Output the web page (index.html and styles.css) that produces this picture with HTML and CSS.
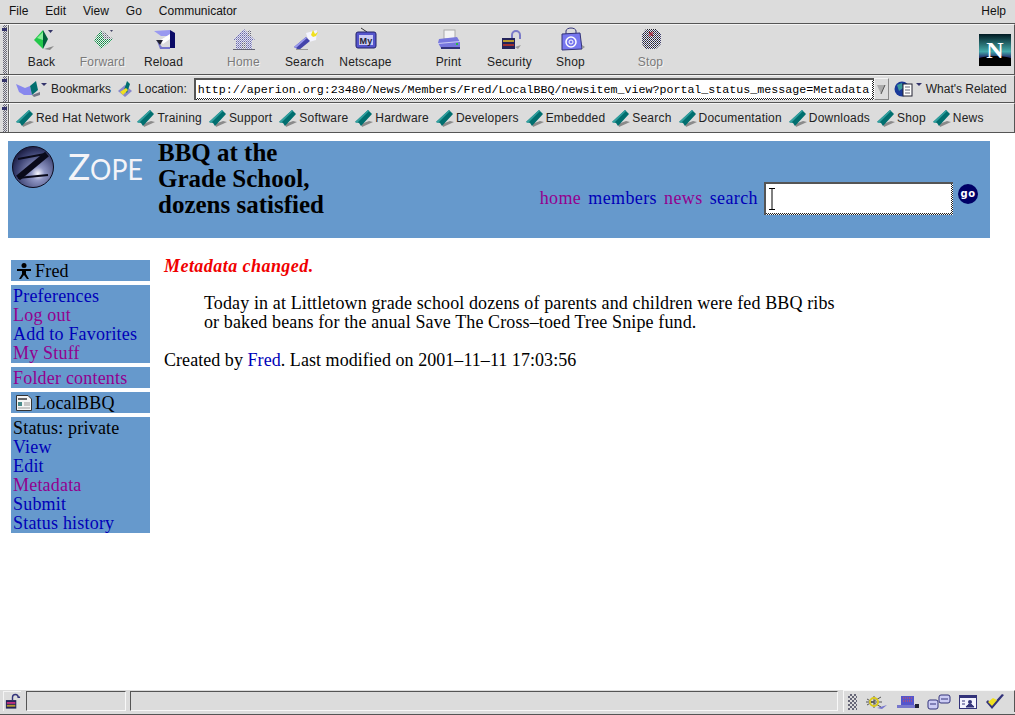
FILE: index.html
```html
<!DOCTYPE html>
<html lang="en">
<head>
  <meta charset="UTF-8" />
  <title>BBQ at the Grade School, dozens satisfied</title>
  <link rel="stylesheet" href="styles.css">
</head>
<body>
  <!-- shared icons -->
  <svg class="defs" width="0" height="0">
    <defs>
      <pattern id="dith-green" width="2" height="2" patternUnits="userSpaceOnUse">
        <rect width="2" height="2" fill="#eef4ee"/><rect width="1" height="1" fill="#117744"/><rect x="1" y="1" width="1" height="1" fill="#33aa66"/>
      </pattern>
      <pattern id="dith-grey" width="2" height="2" patternUnits="userSpaceOnUse">
        <rect width="2" height="2" fill="#e8e8e8"/><rect width="1" height="1" fill="#667"/><rect x="1" y="1" width="1" height="1" fill="#aab"/>
      </pattern>
      <pattern id="dith-blue" width="2" height="2" patternUnits="userSpaceOnUse">
        <rect width="2" height="2" fill="#e4e4ee"/><rect width="1" height="1" fill="#6666aa"/><rect x="1" y="1" width="1" height="1" fill="#9999cc"/>
      </pattern>
      <pattern id="dith-dark" width="2" height="2" patternUnits="userSpaceOnUse">
        <rect width="2" height="2" fill="#e4e4f0"/><rect width="1" height="1" fill="#222"/><rect x="1" y="1" width="1" height="1" fill="#444466"/>
      </pattern>
      <radialGradient id="zsphere" cx="0.62" cy="0.66" r="0.75">
        <stop offset="0" stop-color="#f8f8ff"/><stop offset="0.22" stop-color="#8f96c4"/><stop offset="0.7" stop-color="#3a4070"/><stop offset="1" stop-color="#101030"/>
      </radialGradient>
      <linearGradient id="nsky" x1="0" y1="0" x2="0" y2="1">
        <stop offset="0" stop-color="#001a22"/><stop offset="0.55" stop-color="#44aaaa"/><stop offset="0.75" stop-color="#226"/>
      </linearGradient>
      <symbol id="i-mark" viewBox="0 0 18 17">
        <polygon points="7,17 18,12 14,11 6,14" fill="#8a8a8a"/>
        <polygon points="0,12 13,0 17,4 6,16 4,13" fill="#006f6f"/>
        <polygon points="0,12 13,0 14,1 2,13" fill="#33a0a0"/>
      </symbol>
    </defs>
  </svg>

  <nav class="menubar">
    <span>File</span><span>Edit</span><span>View</span><span>Go</span><span>Communicator</span>
    <span class="menu-help">Help</span>
  </nav>

  <div class="bar toolbar">
    <div class="grip"></div>
    <div class="tb-group tb-first">
      <div class="tb-btn">
        <svg viewBox="0 0 32 26"><polygon points="18,22 28,19 24,23" fill="#8a8a8a"/><polygon points="8,13 17,3 17,22" fill="#22c84a"/><polygon points="11,11 17,5 17,13" fill="#88ee99"/><polygon points="17,3 22,12 17,22" fill="#00603a"/><polygon points="22,3 27,3 24.5,6" fill="#333366"/></svg>
        <span>Back</span>
      </div>
      <div class="tb-btn off">
        <svg viewBox="0 0 32 26"><polygon points="7,13 14,3 26,12 14,22" fill="url(#dith-green)"/><polygon points="14,3 26,12 17,12" fill="url(#dith-grey)"/><polygon points="23,3 26,3 24.5,5" fill="#446"/></svg>
        <span>Forward</span>
      </div>
      <div class="tb-btn">
        <svg viewBox="0 0 32 26"><polygon points="6,4 22,3 22,9 13,9" fill="#9a9af0"/><polygon points="22,3 27,6 27,21 22,21" fill="#0a0a66"/><polygon points="11,14 22,7 22,12 15,17" fill="#fff"/><polygon points="9,14 14,20 22,20 22,22 12,22" fill="#7777cc"/><polygon points="8,13 15,13 12,18" fill="#223"/></svg>
        <span>Reload</span>
      </div>
    </div>
    <div class="tb-group">
      <div class="tb-btn off">
        <svg viewBox="0 0 32 26"><polygon points="16,2 27,13 24,13 24,22 8,22 8,13 5,13" fill="url(#dith-blue)"/><rect x="20" y="3" width="3" height="6" fill="url(#dith-grey)"/><rect x="14" y="15" width="4" height="7" fill="url(#dith-grey)"/><rect x="5" y="22" width="22" height="1" fill="#667"/></svg>
        <span>Home</span>
      </div>
      <div class="tb-btn">
        <svg viewBox="0 0 32 26"><polygon points="17,6 28,3 27,13 20,15" fill="#f4f4ff"/><polygon points="24,3 26,7 29,5 27,9 24,10 22,8" fill="#f0e020"/><polygon points="5,20 17,10 21,14 10,23" fill="#4444aa"/><polygon points="5,20 17,10 18,11 7,21" fill="#9999ee"/><rect x="7" y="22" width="12" height="1" fill="#999"/></svg>
        <span>Search</span>
      </div>
      <div class="tb-btn">
        <svg viewBox="0 0 32 26"><path d="M11 1 L17 5" stroke="#333" fill="none"/><rect x="6" y="5" width="20" height="16" rx="2" fill="#5555cc" stroke="#22226a"/><rect x="9" y="8" width="14" height="10" fill="#ccccf4"/><text x="16" y="16.5" class="tv-text" text-anchor="middle">My</text></svg>
        <span>Netscape</span>
      </div>
    </div>
    <div class="tb-group tb-wide">
      <div class="tb-btn">
        <svg viewBox="0 0 32 26"><rect x="11" y="3" width="11" height="9" fill="#f4f4f4" stroke="#aaa"/><polygon points="6,12 24,10 27,15 27,20 8,21 5,16" fill="#7777dd"/><polygon points="5,16 27,14 27,15 5,17" fill="#ccccf4"/><rect x="8" y="20" width="19" height="2" fill="#33337a"/><rect x="23" y="16" width="2" height="2" fill="#22bb44"/></svg>
        <span>Print</span>
      </div>
      <div class="tb-btn">
        <svg viewBox="0 0 32 26"><path d="M18 12 V8 a4 4 0 0 1 8 0 v4" fill="none" stroke="#7a7ac8" stroke-width="2"/><rect x="8" y="11" width="13" height="11" fill="#23235a"/><rect x="9" y="13" width="11" height="2" fill="#b89a30"/><rect x="9" y="17" width="11" height="2" fill="#a03030"/><polygon points="21,20 27,18 24,22" fill="#999"/></svg>
        <span>Security</span>
      </div>
      <div class="tb-btn">
        <svg viewBox="0 0 32 26"><path d="M11 7 V4 a5 3 0 0 1 10 0 v3" fill="none" stroke="#33337a"/><polygon points="7,7 25,6 27,22 7,23" fill="#7777ee" stroke="#33337a"/><circle cx="16" cy="15" r="5" fill="none" stroke="#fff" stroke-width="1.5"/><circle cx="16" cy="15" r="2" fill="none" stroke="#fff"/><polygon points="27,18 30,20 27,22" fill="#999"/></svg>
        <span>Shop</span>
      </div>
    </div>
    <div class="tb-group">
      <div class="tb-btn off">
        <svg viewBox="0 0 32 26"><polygon points="11,2 21,2 26,7 26,17 21,22 11,22 7,17 7,7" fill="url(#dith-dark)"/><path d="M14 5 L18 9 M18 5 L14 9" stroke="#aa3344" stroke-width="1.5"/></svg>
        <span>Stop</span>
      </div>
    </div>
    <svg class="n-logo" viewBox="0 0 32 32" width="32" height="32">
      <rect width="32" height="32" fill="url(#nsky)"/>
      <ellipse cx="16" cy="36" rx="30" ry="14" fill="#000"/>
      <text x="16" y="24" class="n-letter" text-anchor="middle">N</text>
    </svg>
  </div>

  <div class="bar locbar">
    <div class="grip"></div>
    <svg class="loc-book" viewBox="0 0 24 18" width="24" height="18"><polygon points="0,4 9,8 14,6 16,15 8,15 3,12" fill="#8888ee"/><polygon points="14,6 20,1 22,10 16,15" fill="#006f6f"/><polygon points="16,15 24,12 24,15 18,17" fill="#778"/></svg>
    <span class="caret"></span>
    <span class="loc-label">Bookmarks</span>
    <svg class="loc-pin" viewBox="0 0 16 18" width="16" height="18"><polygon points="1,11 8,5 15,11 8,17" fill="#8888cc"/><polygon points="7,10 10,1 13,4 10,13" fill="#006f6f"/><polygon points="3,12 9,8 11,10 6,15" fill="#f0e020"/></svg>
    <span class="loc-label">Location:</span>
    <div class="field loc-field"><div class="field-in">http://aperion.org:23480/News/Members/Fred/LocalBBQ/newsitem_view?portal_status_message=Metadata</div></div>
    <div class="loc-drop"><svg viewBox="0 0 10 12" width="10" height="12"><polygon points="1,2 9,2 5,11" fill="#aaa"/><path d="M9 2 L5 11" stroke="#555"/></svg></div>
    <svg class="loc-rel" viewBox="0 0 22 18" width="22" height="18"><circle cx="8" cy="9" r="7.5" fill="#1a3a9a"/><path d="M3 5 L8 3 L9 8 L5 11 Z" fill="#3a9a9a"/><rect x="9" y="4" width="9" height="12" fill="#fff" stroke="#223"/><path d="M11 7 H16 M11 10 H16 M11 13 H16" stroke="#667"/></svg>
    <span class="caret"></span>
    <span class="loc-label">What's Related</span>
  </div>

  <div class="bar personal">
    <div class="grip"></div>
    <div class="marks">
      <span class="mark"><svg width="18" height="17"><use href="#i-mark"/></svg>Red Hat Network</span>
      <span class="mark"><svg width="18" height="17"><use href="#i-mark"/></svg>Training</span>
      <span class="mark"><svg width="18" height="17"><use href="#i-mark"/></svg>Support</span>
      <span class="mark"><svg width="18" height="17"><use href="#i-mark"/></svg>Software</span>
      <span class="mark"><svg width="18" height="17"><use href="#i-mark"/></svg>Hardware</span>
      <span class="mark"><svg width="18" height="17"><use href="#i-mark"/></svg>Developers</span>
      <span class="mark"><svg width="18" height="17"><use href="#i-mark"/></svg>Embedded</span>
      <span class="mark"><svg width="18" height="17"><use href="#i-mark"/></svg>Search</span>
      <span class="mark"><svg width="18" height="17"><use href="#i-mark"/></svg>Documentation</span>
      <span class="mark"><svg width="18" height="17"><use href="#i-mark"/></svg>Downloads</span>
      <span class="mark"><svg width="18" height="17"><use href="#i-mark"/></svg>Shop</span>
      <span class="mark"><svg width="18" height="17"><use href="#i-mark"/></svg>News</span>
    </div>
  </div>

  <main class="page">
    <header class="zope-head">
      <svg class="zope-logo" viewBox="0 0 135 46" width="135" height="46">
        <circle cx="21" cy="25" r="20.5" fill="url(#zsphere)" stroke="#0c0c20"/>
        <path d="M6 17 L33 12" fill="none" stroke="#0a0a1a" stroke-width="2"/>
        <path d="M35 12 L6 36" fill="none" stroke="#0a0a1a" stroke-width="6"/>
        <path d="M6 36 L36 33" fill="none" stroke="#0a0a1a" stroke-width="2"/>
        <text x="56" y="38" class="zope-z">Z</text>
        <text x="78" y="38" class="zope-ope" textLength="53" lengthAdjust="spacingAndGlyphs">OPE</text>
      </svg>
      <h1 class="zope-title">BBQ at the<br>Grade School,<br>dozens satisfied</h1>
      <div class="zope-tools">
        <a class="seen" href="#">home</a>
        <a href="#">members</a>
        <a class="seen" href="#">news</a>
        <a href="#">search</a>
        <div class="field search-field"><div class="field-in"><svg viewBox="0 0 7 22" width="7" height="22"><path d="M0 .5 H6 M3 .5 V21.5 M0 21.5 H6" stroke="#000" fill="none"/></svg></div></div>
        <svg class="go-btn" viewBox="0 0 20 20" width="20" height="20"><circle cx="10" cy="10" r="10" fill="#000066"/><text x="10" y="13" class="go-text" text-anchor="middle">go</text></svg>
      </div>
    </header>

    <div class="columns">
      <aside class="side">
        <div class="side-box side-head">
          <svg viewBox="0 0 16 16" width="16" height="16"><circle cx="8" cy="2.5" r="2.5"/><path d="M1 6 H15 V8 H10 V11 L13 16 H11 L8 12 L5 16 H3 L6 11 V8 H1 Z"/></svg>
          Fred
        </div>
        <div class="side-box">
          <a href="#">Preferences</a>
          <a class="seen" href="#">Log out</a>
          <a href="#">Add to Favorites</a>
          <a class="seen" href="#">My Stuff</a>
        </div>
        <div class="side-box">
          <a class="seen" href="#">Folder contents</a>
        </div>
        <div class="side-box side-head">
          <svg viewBox="0 0 16 16" width="16" height="16"><polygon points=".5,.5 12,.5 15.5,4 15.5,15.5 .5,15.5" fill="#f4f4f4" stroke="#333"/><rect x="2" y="3" width="9" height="2" fill="#666"/><rect x="2" y="7" width="4" height="4" fill="#4a8a8a"/><path d="M8 8 H14 M8 10 H14 M2 13 H14" stroke="#999"/></svg>
          LocalBBQ
        </div>
        <div class="side-box">
          <span>Status: private</span>
          <a href="#">View</a>
          <a href="#">Edit</a>
          <a class="seen" href="#">Metadata</a>
          <a href="#">Submit</a>
          <a href="#">Status history</a>
        </div>
      </aside>

      <section class="article">
        <p class="message">Metadata changed.</p>
        <p class="lead">Today in at Littletown grade school dozens of parents and children were fed BBQ ribs or baked beans for the anual Save The Cross–toed Tree Snipe fund.</p>
        <p class="byline">Created by <a href="#">Fred</a>. Last modified on 2001–11–11 17:03:56</p>
      </section>
    </div>
  </main>

  <footer class="status">
    <div class="st-lock"><svg viewBox="0 0 18 17" width="18" height="17"><path d="M9 7 V4 a3 3 0 0 1 6 0 h2" fill="none" stroke="#33337a" stroke-width="1.5"/><rect x="2" y="7" width="11" height="9" fill="#23235a"/><rect x="3" y="9" width="9" height="2" fill="#c03080"/><rect x="3" y="12" width="9" height="2" fill="#b89a30"/></svg></div>
    <div class="st-cell st-small"></div>
    <div class="st-cell st-wide"></div>
    <div class="st-comps">
      <div class="st-dots"></div>
      <svg viewBox="0 0 22 14" width="22" height="14"><path d="M2 4 L16 12 M2 10 L16 2 M9 1 V13 M1 7 H17" stroke="#555"/><circle cx="9" cy="7" r="4" fill="none" stroke="#d8c820" stroke-width="2"/><polygon points="12,13 22,10 17,14" fill="#7777cc"/></svg>
      <svg viewBox="0 0 24 14" width="24" height="14"><rect x="6" y="1" width="13" height="9" fill="#5555cc"/><path d="M8 3 H17 M8 6 H17" stroke="#e05050" stroke-dasharray="1 1"/><polygon points="2,10 20,10 20,13 2,13" fill="#7777cc"/><rect x="20" y="9" width="4" height="4" fill="#223"/></svg>
      <svg viewBox="0 0 24 16" width="24" height="16"><rect x="1" y="6" width="10" height="9" rx="2" fill="#ccccf4" stroke="#33337a"/><rect x="12" y="1" width="11" height="8" rx="2" fill="#ccccf4" stroke="#33337a"/><path d="M3 10 H9 M14 5 H21" stroke="#33337a"/></svg>
      <svg viewBox="0 0 18 14" width="18" height="14"><rect x=".5" y=".5" width="17" height="13" fill="#f4f4ff" stroke="#33337a"/><rect x="1" y="1" width="16" height="2" fill="#33337a"/><circle cx="11" cy="7" r="2" fill="#33337a"/><path d="M7 12 Q11 6 15 12 Z M3 6 H6 M3 9 H6" fill="#33337a" stroke="#33337a"/></svg>
      <svg viewBox="0 0 20 16" width="20" height="16"><polygon points="1,8 7,15 19,1 17,0 7,11 3,6" fill="#33337a"/><polygon points="3,8 8,4 12,6 7,12" fill="#f0e020"/></svg>
    </div>
  </footer>
</body>
</html>
```

FILE: styles.css
```css
* {
  box-sizing: border-box;
}
html, body {
  margin: 0;
  height: 100%;
}
body {
  width: 1015px;
  height: 715px;
  overflow: hidden;
  display: flex;
  flex-direction: column;
  background-color: #dcdcdc;
  font-family: "Liberation Sans", Arial, sans-serif;
  font-size: 12px;
  color: #000;
}
.defs {
  display: block;
  flex: none;
}

/* menu and toolbars */
.menubar {
  flex: none;
  height: 24px;
  display: flex;
  align-items: center;
  gap: 17px;
  padding: 0 9px 1px 9px;
  border-bottom: 1px solid #555;
  color: #111;
}
.menu-help {
  margin-left: auto;
}
.bar {
  flex: none;
  display: flex;
  align-items: center;
  border-top: 1px solid #f4f4f4;
  border-bottom: 1px solid #555;
  border-right: 1px solid #555;
}
.toolbar {
  height: 51px;
}
.locbar {
  height: 28px;
}
.personal {
  height: 30px;
}
.grip {
  flex: none;
  align-self: stretch;
  width: 9px;
  border-right: 1px solid #666;
  background-image:
    linear-gradient(#33336a, #33336a),
    repeating-conic-gradient(#667 0 25%, transparent 0 50%),
    repeating-conic-gradient(#667 0 25%, transparent 0 50%);
  background-size: 5px 3px, 2px 2px, 2px 2px;
  background-position: 2px 3px, 3px 8px, 5px 8px;
  background-repeat: no-repeat, repeat-y, repeat-y;
  box-shadow: 1px 0 0 #f4f4f4;
}

.tb-group {
  align-self: flex-start;
  margin-top: 2px;
  margin-left: 19px;
  display: flex;
}
.tb-first {
  margin-left: 2px;
}
.tb-wide {
  margin-left: 22px;
}
.tb-btn {
  width: 61px;
  display: flex;
  flex-direction: column;
  align-items: center;
  color: #222;
  letter-spacing: 0.2px;
}
.tb-btn svg {
  width: 32px;
  height: 26px;
  margin-bottom: 2px;
}
.tb-btn span {
  line-height: 14px;
}
.tb-btn.off span {
  color: #7a7a7a;
  text-shadow: 1px 1px 0 #f4f4f4;
}
.tv-text {
  font: bold 9px "Liberation Sans", sans-serif;
  fill: #223;
}
.n-logo {
  margin-left: auto;
  margin-right: 3px;
}
.n-letter {
  font: bold 24px "Liberation Serif", serif;
  fill: #fff;
}

.locbar .grip {
  margin-right: 7px;
}
.loc-label {
  flex: none;
  color: #222;
  white-space: nowrap;
}
.caret {
  flex: none;
  width: 0;
  height: 0;
  margin: -9px 4px 0 0;
  border-left: 3px solid transparent;
  border-right: 3px solid transparent;
  border-top: 3px solid #33336a;
}
.loc-pin {
  flex: none;
  margin: 0 5px 0 6px;
}
.loc-book {
  flex: none;
  margin-right: 1px;
}
.field {
  flex: none;
  border-top: 2px solid #555;
  border-left: 2px solid #555;
  padding: 0 2px 2px 0;
  background: repeating-conic-gradient(#222 0 25%, #fff 0 50%) 0 0 / 2px 2px;
}
.field-in {
  background-color: #fff;
  height: 100%;
  overflow: hidden;
  white-space: nowrap;
}
.loc-field {
  width: 680px;
  height: 22px;
  margin-left: 7px;
}
.loc-field .field-in {
  padding-left: 2px;
  font-family: "Liberation Mono", "Courier New", monospace;
  font-size: 11.67px;
  line-height: 20px;
}
.loc-drop {
  flex: none;
  width: 15px;
  height: 22px;
  display: flex;
  align-items: center;
  justify-content: center;
  border: 1px solid #888;
  border-left-color: #f4f4f4;
  border-top-color: #f4f4f4;
}
.loc-rel {
  flex: none;
  margin-left: 5px;
}

.personal .grip {
  margin-right: 7px;
}
.marks {
  display: flex;
  gap: 7px;
}
.mark {
  display: flex;
  align-items: center;
  gap: 2px;
  color: #222;
  letter-spacing: 0.2px;
  white-space: nowrap;
}

/* zope page */
.page {
  flex: 1;
  min-height: 0;
  overflow: hidden;
  padding: 8px 0 0 8px;
  background-color: #fff;
  font-family: "Liberation Serif", "Times New Roman", serif;
  font-size: 18px;
  line-height: 19px;
  letter-spacing: 0.12px;
}
.page a {
  color: #0000b8;
  text-decoration: none;
}
.page a.seen {
  color: #93008f;
}
.zope-head {
  width: 982px;
  height: 97px;
  display: flex;
  background-color: #6699cc;
}
.zope-logo {
  flex: none;
  margin: 1px 0 0 4px;
}
.zope-z {
  font: 37px "Lato", "Liberation Sans", sans-serif;
  fill: #f4f4f8;
}
.zope-ope {
  font: 28px "Lato", "Liberation Sans", sans-serif;
  fill: #f4f4f8;
}
.zope-title {
  margin: -1px 0 0 11px;
  font-size: 25px;
  line-height: 26px;
  font-weight: bold;
  letter-spacing: 0;
  color: #000;
}
.zope-tools {
  margin-left: auto;
  margin-top: 41px;
  height: 33px;
  display: flex;
  align-items: center;
  gap: 7px;
  padding-right: 12px;
  letter-spacing: 0.4px;
}
.search-field {
  width: 189px;
  height: 33px;
  margin: 0 -1px 0 -1px;
}
.search-field .field-in {
  display: flex;
  align-items: center;
  padding-left: 3px;
}
.go-btn {
  align-self: flex-start;
  margin-top: 2px;
  margin-left: -1px;
}
.go-text {
  font: bold 10px "DejaVu Sans", sans-serif;
  fill: #fff;
}

.columns {
  display: flex;
}
.side {
  flex: none;
  width: 139px;
  margin: 22px 0 0 3px;
  display: flex;
  flex-direction: column;
  gap: 4px;
  letter-spacing: 0.2px;
}
.side-box {
  display: flex;
  flex-direction: column;
  padding: 2px 0 0 2px;
  background-color: #6699cc;
}
.side-head {
  flex-direction: row;
  align-items: center;
  gap: 3px;
  height: 21px;
  padding: 1px 0 0 5px;
}
.article {
  margin-left: 14px;
  padding-top: 19px;
}
.article p {
  margin: 0;
}
.article .message {
  font-weight: bold;
  font-style: italic;
  letter-spacing: 0.45px;
  color: #f00000;
}
.article .lead {
  width: 640px;
  margin: 18px 0 19px 40px;
}
.article .byline {
  letter-spacing: 0.05px;
}

/* status bar */
.status {
  flex: none;
  height: 25px;
  display: flex;
  align-items: center;
  padding: 0 0 2px 3px;
  border-bottom: 1px solid #555;
}
.st-lock {
  flex: none;
  width: 18px;
  height: 20px;
  display: flex;
  align-items: center;
  justify-content: center;
  border-top: 1px solid #f4f4f4;
  border-left: 1px solid #f4f4f4;
}
.st-cell {
  flex: none;
  height: 20px;
  border-top: 1px solid #555;
  border-left: 1px solid #555;
  border-right: 1px solid #f8f8f8;
  border-bottom: 1px solid #f8f8f8;
}
.st-small {
  width: 100px;
  margin-left: 5px;
}
.st-wide {
  width: 708px;
  margin-left: 4px;
}
.st-comps {
  flex: 1;
  height: 22px;
  margin-left: 5px;
  padding: 0 9px 0 4px;
  display: flex;
  align-items: center;
  justify-content: space-between;
  border-left: 1px solid #f8f8f8;
  border-top: 1px solid #f8f8f8;
  border-right: 1px solid #555;
}
.st-dots {
  width: 9px;
  height: 16px;
  background: repeating-conic-gradient(#667 0 25%, transparent 0 50%) 0 0 / 4px 4px;
}
```
